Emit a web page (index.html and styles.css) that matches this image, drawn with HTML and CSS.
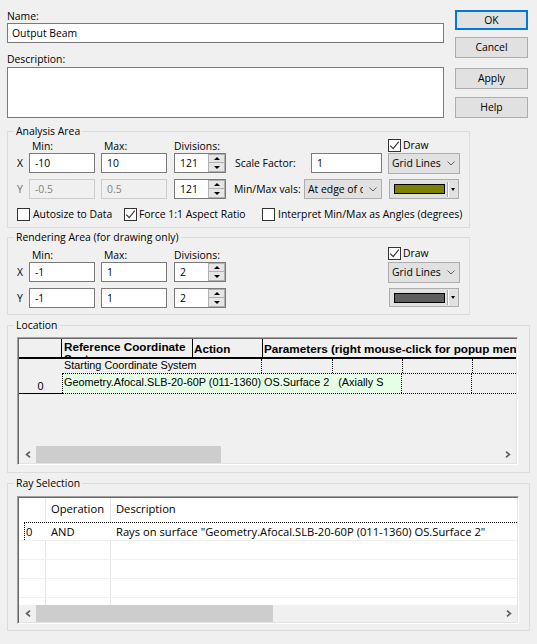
FILE: index.html
```html
<!DOCTYPE html>
<html lang="en">
<head>
<meta charset="utf-8">
<title>Output Beam</title>
<link rel="stylesheet" href="styles.css">
</head>
<body>
<div class="dialog">
  <div class="top">
    <div class="top-left">
      <div class="lbl">Name:</div>
      <div class="edit name-edit">Output Beam</div>
      <div class="lbl desc-lbl">Description:</div>
      <div class="edit desc-edit"></div>
    </div>
    <div class="buttons">
      <div class="btn btn-ok">OK</div>
      <div class="btn btn-cancel">Cancel</div>
      <div class="btn btn-apply">Apply</div>
      <div class="btn btn-help">Help</div>
    </div>
  </div>

  <fieldset class="group analysis">
    <legend>Analysis Area</legend>
    <div class="hdr hdr-a">
      <span class="ax"></span>
      <span class="col-lbl w66">Min:</span>
      <span class="col-lbl w66 ml6">Max:</span>
      <span class="col-lbl ml7 w52">Divisions:</span>
      <span class="chk draw-chk"><span class="cb"><svg viewBox="0 0 11 11" width="11" height="11"><path d="M1.3 5.6 L4.2 8.6 L9.8 1.6"/></svg></span>Draw</span>
    </div>
    <div class="row">
      <span class="ax">X</span>
      <span class="edit sm w66">-10</span>
      <span class="edit sm w66 ml6">10</span>
      <span class="spin ml7"><span class="spin-val">121</span><span class="spin-btns"><span class="sb"><span class="tri-up"></span></span><span class="sb"><span class="tri-down"></span></span></span></span>
      <span class="rlbl sf-lbl">Scale Factor:</span>
      <span class="edit sm sf-edit">1</span>
      <span class="combo grid-combo ml6"><span class="combo-text">Grid Lines</span><svg class="chev" viewBox="0 0 8 5" width="8" height="5"><polyline points="0.5,0.5 4,4 7.5,0.5"/></svg></span>
    </div>
    <div class="row row-y">
      <span class="ax dis">Y</span>
      <span class="edit sm dis w66">-0.5</span>
      <span class="edit sm dis w66 ml6">0.5</span>
      <span class="spin ml7"><span class="spin-val">121</span><span class="spin-btns"><span class="sb"><span class="tri-up"></span></span><span class="sb"><span class="tri-down"></span></span></span></span>
      <span class="rlbl mm-lbl">Min/Max vals:</span>
      <span class="combo mm-combo"><span class="combo-text">At edge of data</span><svg class="chev" viewBox="0 0 8 5" width="8" height="5"><polyline points="0.5,0.5 4,4 7.5,0.5"/></svg></span>
      <span class="colorcombo ml7"><span class="swatch olive"></span><span class="sep"></span><span class="tri-down"></span></span>
    </div>
    <div class="checks">
      <span class="chk chk-a"><span class="cb"></span>Autosize to Data</span>
      <span class="chk chk-b"><span class="cb"><svg viewBox="0 0 11 11" width="11" height="11"><path d="M1.3 5.6 L4.2 8.6 L9.8 1.6"/></svg></span>Force 1:1 Aspect Ratio</span>
      <span class="chk"><span class="cb"></span>Interpret Min/Max as Angles (degrees)</span>
    </div>
  </fieldset>

  <fieldset class="group rendering">
    <legend>Rendering Area (for drawing only)</legend>
    <div class="hdr hdr-r">
      <span class="ax"></span>
      <span class="col-lbl w66">Min:</span>
      <span class="col-lbl w66 ml6">Max:</span>
      <span class="col-lbl ml7 w52">Divisions:</span>
      <span class="chk draw-chk"><span class="cb"><svg viewBox="0 0 11 11" width="11" height="11"><path d="M1.3 5.6 L4.2 8.6 L9.8 1.6"/></svg></span>Draw</span>
    </div>
    <div class="row">
      <span class="ax">X</span>
      <span class="edit sm w66">-1</span>
      <span class="edit sm w66 ml6">1</span>
      <span class="spin ml7"><span class="spin-val">2</span><span class="spin-btns"><span class="sb"><span class="tri-up"></span></span><span class="sb"><span class="tri-down"></span></span></span></span>
      <span class="combo grid-combo r-combo"><span class="combo-text">Grid Lines</span><svg class="chev" viewBox="0 0 8 5" width="8" height="5"><polyline points="0.5,0.5 4,4 7.5,0.5"/></svg></span>
    </div>
    <div class="row row-y">
      <span class="ax">Y</span>
      <span class="edit sm w66">-1</span>
      <span class="edit sm w66 ml6">1</span>
      <span class="spin ml7"><span class="spin-val">2</span><span class="spin-btns"><span class="sb"><span class="tri-up"></span></span><span class="sb"><span class="tri-down"></span></span></span></span>
      <span class="colorcombo r-color"><span class="swatch gray"></span><span class="sep"></span><span class="tri-down"></span></span>
    </div>
  </fieldset>

  <fieldset class="group wide location">
    <legend>Location</legend>
    <div class="gbody loc-body">
      <div class="sunken loc-grid">
        <div class="lh">
          <div class="lh-fixed"></div>
          <div class="lh-ref">Reference Coordinate System</div>
          <div class="lh-act">Action</div>
          <div class="lh-par">Parameters (right mouse-click for popup menu)</div>
        </div>
        <div class="lb">
          <div class="lb-fixed">0</div>
          <div class="lb-rows">
            <div class="lr lr1">
              <div class="lc c-a">Starting Coordinate System</div>
              <div class="lc c-b"></div>
              <div class="lc c-c"></div>
              <div class="lc c-d"></div>
              <div class="lc c-e"></div>
            </div>
            <div class="lr lr2">
              <div class="lc green">Geometry.Afocal.SLB-20-60P (011-1360) OS.Surface 2   (Axially S</div>
              <div class="lc c-d"></div>
              <div class="lc c-e"></div>
            </div>
          </div>
        </div>
        <div class="gfill"></div>
        <div class="hscroll">
          <span class="sarrow"><svg viewBox="0 0 6 7" width="6" height="7"><polyline points="5,0.7 1.6,3.5 5,6.3"/></svg></span>
          <span class="thumb loc-thumb"></span>
          <span class="strack"></span>
          <span class="sarrow"><svg viewBox="0 0 6 7" width="6" height="7"><polyline points="1,0.7 4.4,3.5 1,6.3"/></svg></span>
        </div>
      </div>
    </div>
  </fieldset>

  <fieldset class="group wide rays">
    <legend>Ray Selection</legend>
    <div class="gbody ray-body">
      <div class="sunken ray-grid">
        <div class="rh">
          <div class="rc rc0"></div>
          <div class="rc rc1">Operation</div>
          <div class="rc rc2">Description</div>
        </div>
        <div class="rbody">
          <div class="rr r0">
            <div class="focus">
              <div class="f0">0</div>
              <div class="f1">AND</div>
              <div class="f2">Rays on surface "Geometry.Afocal.SLB-20-60P (011-1360) OS.Surface 2"</div>
            </div>
          </div>
          <div class="rr"><div class="rc rc0"></div><div class="rc rc1"></div><div class="rc rc2"></div></div>
          <div class="rr"><div class="rc rc0"></div><div class="rc rc1"></div><div class="rc rc2"></div></div>
          <div class="rr"><div class="rc rc0"></div><div class="rc rc1"></div><div class="rc rc2"></div></div>
          <div class="rr"><div class="rc rc0"></div><div class="rc rc1"></div><div class="rc rc2"></div></div>
        </div>
        <div class="hscroll">
          <span class="sarrow"><svg viewBox="0 0 6 7" width="6" height="7"><polyline points="5,0.7 1.6,3.5 5,6.3"/></svg></span>
          <span class="thumb ray-thumb"></span>
          <span class="strack"></span>
          <span class="sarrow"><svg viewBox="0 0 6 7" width="6" height="7"><polyline points="1,0.7 4.4,3.5 1,6.3"/></svg></span>
        </div>
      </div>
    </div>
  </fieldset>
</div>
</body>
</html>
```

FILE: styles.css
```css
* { box-sizing: border-box; }
html, body { margin: 0; padding: 0; }
body {
  background: #f0f0f0;
  font-family: "Open Sans", "Noto Sans", sans-serif;
  font-size: 10.4px;
  color: #000;
  width: 537px;
  height: 644px;
  overflow: hidden;
}
.dialog { padding: 9px 0 0 7px; }

/* top */
.top { display: flex; }
.top-left { width: 437px; }
.lbl { display: block; height: 14px; line-height: 14px; white-space: nowrap; }
.desc-lbl { margin-top: 9px; margin-bottom: 1px; }
.edit {
  display: block;
  background: #fff;
  border: 1px solid #7a7a7a;
  height: 20px;
  line-height: 18px;
  padding-left: 4px;
  white-space: nowrap;
  overflow: hidden;
}
.desc-edit { height: 51px; }
.buttons { margin-left: 11px; width: 73px; display: flex; flex-direction: column; }
.btn {
  height: 21px;
  line-height: 19px;
  border: 1px solid #adadad;
  background: #e1e1e1;
  text-align: center;
}
.btn-ok { margin-top: 1px; height: 20px; line-height: 16px; border: 2px solid #0078d7; }
.btn-cancel { margin-top: 7px; }
.btn-apply { margin-top: 10px; }
.btn-help { margin-top: 8px; }

/* group boxes */
.group {
  margin: 0;
  padding: 0;
  border: 1px solid #dcdcdc;
  min-width: 0;
  width: 463px;
}
.group > legend {
  padding: 0 2px;
  margin-left: 6px;
  height: 14px;
  line-height: 14px;
  white-space: nowrap;
}
.analysis { margin-top: 6px; padding-bottom: 6px; }
.rendering { margin-top: 2px; padding-bottom: 6px; }
.wide { width: 523px; margin-top: 3px; }

.hdr { display: flex; align-items: flex-start; }
.hdr-a { height: 15px; padding-top: 1px; }
.hdr-r { height: 18px; padding-top: 3px; }
.hdr-r .col-lbl { padding-top: 1px; }
.col-lbl { display: block; line-height: 14px; padding-left: 3px; white-space: nowrap; }
.w66 { width: 66px; }
.w52 { width: 52px; padding-left: 0; }
.ml6 { margin-left: 6px; }
.ml7 { margin-left: 7px; }
.ax { display: block; width: 21px; padding-left: 9px; line-height: 20px; }
.dis.ax { color: #6d6d6d; }
.edit.sm { padding-left: 5px; }
.edit.dis { background: #f0f0f0; border-color: #cccccc; color: #838383; }

.row { display: flex; align-items: flex-start; height: 20px; }
.row-y { margin-top: 6px; }
.rlbl { display: block; line-height: 20px; white-space: nowrap; }
.sf-lbl { margin-left: 9px; width: 76px; }
.sf-edit { width: 71px; }
.mm-lbl { margin-left: 8px; width: 70px; }

/* spin */
.spin {
  display: flex;
  width: 52px;
  height: 20px;
  border: 1px solid #7a7a7a;
  background: #fff;
}
.spin-val { flex: 1; line-height: 18px; padding-left: 5px; }
.spin-btns { width: 17px; display: flex; flex-direction: column; }
.sb {
  height: 9px;
  background: #e6e6e6;
  border: 1px solid #b0b0b0;
  display: flex;
  align-items: center;
  justify-content: center;
}
.sb + .sb { border-top: 0; height: 9px; }
.tri-up { width: 0; height: 0; border-left: 3px solid transparent; border-right: 3px solid transparent; border-bottom: 3px solid #000; }
.tri-down { width: 0; height: 0; border-left: 3px solid transparent; border-right: 3px solid transparent; border-top: 3px solid #000; }

/* combos */
.combo {
  display: flex;
  align-items: center;
  height: 21px;
  border: 1px solid #adadad;
  background: #e1e1e1;
}
.combo-text { flex: 1; overflow: hidden; white-space: nowrap; padding-left: 3px; margin-right: 6px; line-height: 19px; }
.chev { margin-right: 4px; fill: none; stroke: #606060; stroke-width: 1; }
.grid-combo { width: 72px; }
.r-combo { margin-left: 162px; }
.mm-combo { width: 78px; height: 20px; }
.colorcombo {
  display: flex;
  align-items: center;
  width: 70px;
  height: 20px;
  border: 1px solid #adadad;
  background: #e1e1e1;
  padding-left: 4px;
}
.r-color { margin-left: 163px; height: 19px; }
.swatch { width: 51px; height: 10px; border: 1px solid #000; }
.olive { background: #808000; }
.gray { background: #5f5f5f; }
.sep { width: 2px; height: 15px; margin-left: 2px; border-left: 1px solid #a9a9a9; border-right: 1px solid #fff; }
.colorcombo .tri-down { margin-left: 2px; border-left-width: 2.5px; border-right-width: 2.5px; }

/* checkboxes */
.chk { display: flex; align-items: center; white-space: nowrap; height: 13px; line-height: 13px; }
.cb {
  display: block;
  width: 13px;
  height: 13px;
  border: 1px solid #333;
  background: #fff;
  margin-right: 3px;
  flex: none;
}
.cb svg { display: block; fill: none; stroke: #333; stroke-width: 1.1; }
.draw-chk { margin-left: 162px; }
.draw-chk .cb { margin-right: 2px; }
.checks { display: flex; margin-top: 9px; padding-left: 9px; height: 13px; }
.chk-a { width: 107px; }
.chk-b { width: 138px; }
.chk-b .cb { margin-right: 2px; }

/* group bodies */
.gbody { padding-left: 9px; }
.loc-body { padding-top: 5px; padding-bottom: 7px; }
.ray-body { padding-top: 6px; padding-bottom: 6px; }

.sunken {
  border-style: solid;
  border-width: 1px;
  border-color: #a0a0a0 #ffffff #ffffff #a0a0a0;
  box-shadow: inset 1px 1px 0 #696969, inset -1px -1px 0 #e3e3e3;
  padding: 1px;
  display: flex;
  flex-direction: column;
  overflow: hidden;
}

/* location grid */
.loc-grid { width: 501px; height: 128px; background: #f0f0f0; font-family: "Liberation Sans", Arial, sans-serif; font-size: 10.85px; }
.lh { display: flex; height: 20px; border-bottom: 2px solid #000; flex: none; font-weight: bold; font-size: 11.7px; }
.lh > div { overflow: hidden; line-height: 12px; }
.lh-fixed { width: 43px; border-right: 1px solid #000; }
.lh-ref { width: 131px; border-right: 1px solid #000; padding: 2px 0 0 2px; }
.lh-act { width: 70px; border-right: 1px solid #000; padding: 4px 0 0 1px; white-space: nowrap; }
.lh-par { flex: 1; padding: 4px 0 0 1px; white-space: nowrap; }
.lb { display: flex; flex: none; }
.lb-fixed {
  width: 43px;
  height: 35px;
  border-bottom: 1px solid #000;
  display: flex;
  align-items: flex-end;
  justify-content: center;
  line-height: 13px;
}
.lb-rows { flex: 1; }
.lr { display: flex; border-bottom: 1px dotted #000; }
.lr1 { height: 15px; }
.lr2 { height: 20px; }
.lc { border-right: 1px dotted #000; line-height: 13px; white-space: pre; overflow: hidden; }
.c-a { width: 200px; padding-left: 2px; }
.c-b { width: 71px; }
.c-c { width: 70px; }
.c-d { width: 70px; }
.c-e { flex: 1; border-right: 0; }
.green { width: 340px; background: #e6fde6; border-left: 1px dotted #000; padding: 2px 0 0 1px; }
.gfill { flex: 1; }

.hscroll { display: flex; height: 17px; flex: none; background: #f0f0f0; }
.sarrow { width: 17px; display: flex; align-items: center; justify-content: center; }
.sarrow svg { fill: none; stroke: #606060; stroke-width: 1.7; }
.thumb { background: #cdcdcd; }
.loc-thumb { width: 185px; }
.ray-thumb { width: 237px; }
.strack { flex: 1; }

/* ray grid */
.ray-grid { width: 502px; height: 128px; background: #fff; font-size: 11.2px; }
.rh { display: flex; height: 24px; flex: none; }
.rc { border-right: 1px solid #e5e5e5; white-space: nowrap; overflow: hidden; }
.rh .rc { padding: 4px 0 0 5px; line-height: 14px; }
.rc0 { width: 27px; }
.rc1 { width: 65px; }
.rc2 { flex: 1; border-right: 0; }
.rbody { flex: 1; overflow: hidden; }
.rr { display: flex; height: 19px; border-bottom: 1px solid #f0f0f0; }
.r0 { padding-left: 5px; }
.focus { flex: 1; display: flex; border-top: 1px dotted #000; border-left: 1px dotted #000; line-height: 14px; padding-top: 2px; white-space: nowrap; overflow: hidden; }
.f0 { width: 21px; padding-left: 1px; }
.f1 { width: 65px; padding-left: 5px; }
.f2 { flex: 1; padding-left: 5px; }
```
